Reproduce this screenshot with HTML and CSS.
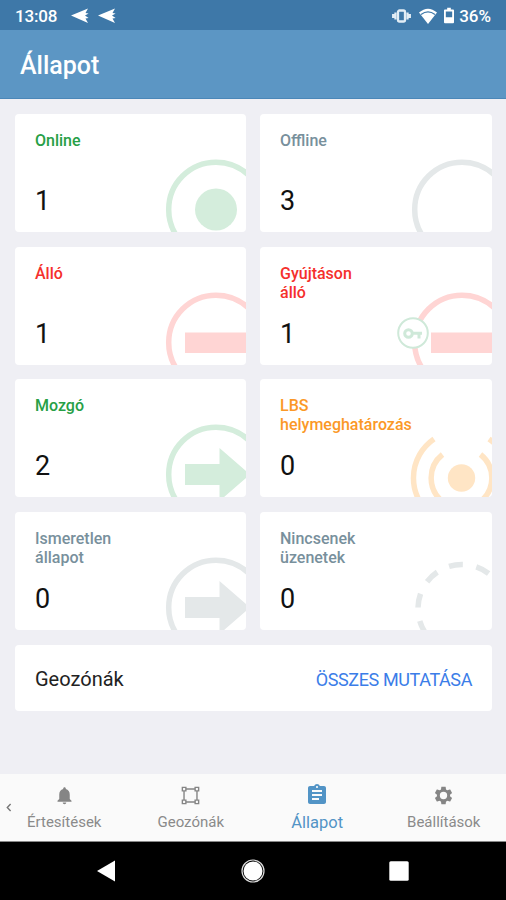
FILE: index.html
```html
<!DOCTYPE html>
<html lang="hu">
  <head>
    <meta charset="UTF-8" />
    <meta name="viewport" content="width=device-width, initial-scale=1.0" />
    <title>Állapot</title>
    <link rel="stylesheet" href="styles.css">
  </head>
  <body>
    <div class="status-bar">
      <span class="clock">13:08</span>
      <svg class="plane" width="18" height="16" viewBox="0 0 18 16"><path d="M0 7.600 17 .5 14.500 5 17.600 5.500 14 7.600 17.600 10 14.500 10.500 17 15Z" /></svg>
      <svg class="plane" width="18" height="16" viewBox="0 0 18 16"><path d="M0 7.600 17 .5 14.500 5 17.600 5.500 14 7.600 17.600 10 14.500 10.500 17 15Z" /></svg>
      <div class="status-right">
        <svg class="vibrate" width="19" height="14" viewBox="0 0 19 14"><path d="M1.200 5v4M3.500 3.500v7M15.500 3.500v7M17.800 5v4" /><rect x="6" y="1.500" width="7" height="11" rx="1.500" /></svg>
        <svg class="wifi" width="18" height="16" viewBox="0 0 18 16"><path d="M0 4.600Q9-3 18 4.600L9 16Z" /><path class="wifi-gap" d="M2 6.400Q9 1.200 16 6.400" /></svg>
        <svg class="battery" width="10" height="17" viewBox="0 0 11 17"><path d="M3.500 0h4v2H10q1 0 1 1v13q0 1-1 1H1q-1 0-1-1V3q0-1 1-1h2.500ZM2 4v6.500h7V4Z" fill-rule="evenodd" /></svg>
        <span class="percent">36%</span>
      </div>
    </div>

    <header class="app-bar">
      <h1>Állapot</h1>
    </header>

    <main class="content">
      <div class="cards">
        <div class="card green">
          <h2>Online</h2>
          <span class="count">1</span>
          <svg class="mark" viewBox="0 0 100 80">
            <circle class="ring" cx="70" cy="57.5" r="47.300" />
            <circle class="solid" cx="70" cy="57.5" r="21" />
          </svg>
        </div>
        <div class="card gray">
          <h2>Offline</h2>
          <span class="count">3</span>
          <svg class="mark" viewBox="0 0 100 80">
            <circle class="ring" cx="70" cy="57.5" r="47.300" />
          </svg>
        </div>
        <div class="card red">
          <h2>Álló</h2>
          <span class="count">1</span>
          <svg class="mark" viewBox="0 0 100 80">
            <circle class="ring" cx="70" cy="57.5" r="47.300" />
            <rect class="solid" x="39" y="47.500" width="62" height="20.500" />
          </svg>
        </div>
        <div class="card red">
          <h2>Gyújtáson<br>álló</h2>
          <span class="count">1</span>
          <svg class="mark" viewBox="0 0 100 80">
            <circle class="ring" cx="70" cy="57.5" r="47.300" />
            <rect class="solid" x="39" y="47.500" width="62" height="20.500" />
            <circle class="key-badge" cx="21" cy="48" r="14.8" />
            <circle class="key" cx="16.500" cy="48.500" r="3.800" />
            <path class="key" d="M20.500 48.200H30M27 48.500v5" />
          </svg>
        </div>
        <div class="card green">
          <h2>Mozgó</h2>
          <span class="count">2</span>
          <svg class="mark" viewBox="0 0 100 80">
            <circle class="ring" cx="70" cy="57.5" r="47.300" />
            <path class="solid" d="M39 47H73.500V31L104 57.500 73.500 84V68H39Z" />
          </svg>
        </div>
        <div class="card orange">
          <h2>LBS<br>helymeghatározás</h2>
          <span class="count">0</span>
          <svg class="mark" viewBox="0 0 100 80">
            <circle class="solid" cx="69.500" cy="61" r="13.700" />
            <path class="ring" d="M42 22A47.300 47.300 0 0 0 42 100M97 22A47.300 47.300 0 0 1 97 100" />
            <path class="ring" d="M50.500 37.500A30 30 0 0 0 50.500 84.500M88.500 37.500A30 30 0 0 1 88.500 84.500" />
          </svg>
        </div>
        <div class="card gray">
          <h2>Ismeretlen<br>állapot</h2>
          <span class="count">0</span>
          <svg class="mark" viewBox="0 0 100 80">
            <circle class="ring" cx="70" cy="57.5" r="47.300" />
            <path class="solid" d="M39 47H73.500V31L104 57.500 73.500 84V68H39Z" />
          </svg>
        </div>
        <div class="card gray">
          <h2>Nincsenek<br>üzenetek</h2>
          <span class="count">0</span>
          <svg class="mark" viewBox="0 0 100 80">
            <circle class="ring dashed" cx="70" cy="58.500" r="44" transform="rotate(252.900 70 58.500)" />
          </svg>
        </div>
      </div>

      <div class="geozones">
        <span>Geozónák</span>
        <a class="show-all">ÖSSZES MUTATÁSA</a>
      </div>
    </main>

    <nav class="tabs">
      <svg class="back" width="6" height="9" viewBox="0 0 6 9"><path d="M4.600 1 1.300 4.500 4.600 8" /></svg>
      <a class="tab">
        <svg width="24" height="24" viewBox="0 0 24 24"><path d="M12 22c1.100 0 2-.9 2-2h-4c0 1.100.9 2 2 2zm6-6v-5c0-3.070-1.640-5.640-4.500-6.320V4c0-.83-.67-1.500-1.500-1.500s-1.500.67-1.500 1.500v.68C7.630 5.360 6 7.920 6 11v5l-2 2v1h16v-1l-2-2z" /></svg>
        <span>Értesítések</span>
      </a>
      <a class="tab">
        <svg width="24" height="24" viewBox="0 0 24 24"><path class="outline" d="M7 4.600H17M7 19.400H17M4.600 7V17M19.400 7V17M2.700 2.700h4v4h-4zM17.300 2.700h4v4h-4zM2.700 17.300h4v4h-4zM17.300 17.300h4v4h-4z" /></svg>
        <span>Geozónák</span>
      </a>
      <a class="tab active">
        <svg width="24" height="24" viewBox="0 0 24 24"><path d="M19 3h-4.180C14.400 1.840 13.300 1 12 1s-2.400.84-2.820 2H5c-1.100 0-2 .9-2 2v14c0 1.100.9 2 2 2h14c1.100 0 2-.9 2-2V5c0-1.100-.9-2-2-2zm-7 0c.55 0 1 .45 1 1s-.45 1-1 1-1-.45-1-1 .45-1 1-1zm2 14H7v-2h7v2zm3-4H7v-2h10v2zm0-4H7V7h10v2z" /></svg>
        <span>Állapot</span>
      </a>
      <a class="tab">
        <svg width="24" height="24" viewBox="0 0 24 24"><path d="M19.430 12.980c.04-.32.07-.64.07-.98s-.03-.66-.07-.98l2.110-1.650c.19-.15.24-.42.12-.64l-2-3.460c-.12-.22-.39-.3-.61-.22l-2.490 1c-.52-.4-1.080-.73-1.690-.98l-.38-2.650C14.460 2.180 14.250 2 14 2h-4c-.25 0-.46.18-.49.42l-.38 2.650c-.61.25-1.170.59-1.690.98l-2.490-1c-.23-.09-.49 0-.61.22l-2 3.460c-.13.22-.07.49.12.64l2.110 1.650c-.04.32-.07.65-.07.98s.03.66.07.98l-2.110 1.650c-.19.15-.24.42-.12.64l2 3.460c.12.22.39.3.61.22l2.490-1c.52.4 1.080.73 1.690.98l.38 2.650c.03.24.24.42.49.42h4c.25 0 .46-.18.49-.42l.38-2.650c.61-.25 1.170-.59 1.690-.98l2.490 1c.23.09.49 0 .61-.22l2-3.460c.12-.22.07-.49-.12-.64l-2.110-1.650zM12 16.200a4.200 4.200 0 1 1 0-8.400 4.200 4.200 0 0 1 0 8.400z" /></svg>
        <span>Beállítások</span>
      </a>
    </nav>

    <div class="system-nav">
      <svg width="20" height="24" viewBox="0 0 20 24"><path d="M1 12 19 1.500V22.500Z" /></svg>
      <svg width="24" height="24" viewBox="0 0 24 24"><circle cx="12" cy="12" r="9.500" /><circle class="home-ring" cx="12" cy="12" r="11" /></svg>
      <svg width="20" height="20" viewBox="0 0 20 20"><rect x=".3" y=".3" width="19.400" height="19.400" rx="1.500" /></svg>
    </div>
  </body>
</html>
```

FILE: styles.css
```css
* {
  margin: 0;
  padding: 0;
  box-sizing: border-box;
}

body {
  display: flex;
  flex-direction: column;
  height: 900px;
  overflow: hidden;
  background-color: #efeff4;
  font-family: Roboto, "Noto Sans", sans-serif;
}

svg {
  display: block;
  flex: none;
}

/* Status bar */
.status-bar {
  display: flex;
  align-items: center;
  height: 30px;
  padding: 1px 15px 0 15px;
  background-color: #3e78a8;
  color: #fff;
  fill: #fff;
  font-size: 17px;
  font-weight: 500;
}

.clock {
  width: 56px;
  letter-spacing: -0.2px;
}

.plane {
  margin-right: 9px;
}

.status-right {
  display: flex;
  align-items: center;
  margin-left: auto;
}

.vibrate {
  margin-right: 8px;
  fill: none;
  stroke: #e2edf5;
  stroke-width: 2.3;
}

.wifi {
  margin-right: 7px;
}

.wifi-gap {
  fill: none;
  stroke: #3e78a8;
  stroke-width: 1.2;
}

.battery {
  margin-right: 5px;
}

/* Header */
.app-bar {
  display: flex;
  align-items: center;
  height: 69px;
  padding: 2px 20px 0;
  background-color: #5c96c4;
  border-bottom: 1px solid #4b87b8;
  color: #fff;
}

.app-bar h1 {
  font-size: 25px;
  font-weight: 500;
}

/* Cards */
.content {
  flex: 1;
  padding: 15px 14px 0 15px;
}

.cards {
  display: grid;
  grid-template-columns: 231px 232px;
  grid-auto-rows: 118px;
  gap: 14.7px 14px;
}

.card {
  position: relative;
  display: flex;
  flex-direction: column;
  justify-content: space-between;
  padding: 17px 20px 15px;
  overflow: hidden;
  background-color: #fff;
  border-radius: 4px;
}

.card h2 {
  font-size: 16px;
  font-weight: 500;
  line-height: 19px;
}

.count {
  color: #111;
  font-size: 27px;
  line-height: 32px;
}

.mark {
  position: absolute;
  right: 0;
  bottom: 0;
  width: 100px;
  height: 80px;
}

.ring {
  fill: none;
  stroke: var(--tint);
  stroke-width: 5.5;
}

.solid {
  fill: var(--tint);
}

.dashed {
  stroke-dasharray: 14 13.65;
}

.key-badge {
  fill: #fff;
  stroke: #cfe9d9;
  stroke-width: 2;
}

.key {
  fill: none;
  stroke: #cfe9d9;
  stroke-width: 3;
}

.green {
  --tint: #d4eddc;
  color: #27a046;
}

.gray {
  --tint: #e4e8e9;
  color: #78909c;
}

.red {
  --tint: #ffd5d4;
  color: #f5302c;
}

.orange {
  --tint: #ffe5c5;
  color: #fb9827;
}

.geozones {
  display: flex;
  align-items: center;
  justify-content: space-between;
  height: 66px;
  margin-top: 15px;
  padding: 2px 20px 0;
  background-color: #fff;
  border-radius: 4px;
  color: #222;
  font-size: 20px;
}

.show-all {
  color: #3b7de8;
  font-size: 18px;
  letter-spacing: -0.4px;
}

/* Bottom tabs */
.tabs {
  display: flex;
  align-items: center;
  height: 68px;
  background-color: #fafafa;
  border-bottom: 1px solid #888;
}

.back {
  margin-left: 6px;
  margin-right: -11px;
  fill: none;
  stroke: #777;
  stroke-width: 1.4;
}

.tab {
  display: flex;
  flex: 1;
  flex-direction: column;
  align-items: center;
  gap: 7px;
  color: #8a8a8a;
  fill: #858585;
  font-size: 15px;
  line-height: 18px;
}

.tabs .tab:last-child {
  margin-right: -1px;
}

.tab svg {
  width: 21px;
  height: 21px;
}

.tab.active {
  color: #5294c6;
  fill: #5294c6;
  font-size: 16.5px;
}

.tab.active svg {
  width: 24px;
  height: 24px;
}

.outline {
  fill: none;
  stroke: #858585;
  stroke-width: 1.6;
}

/* Android navigation buttons */
.system-nav {
  display: flex;
  align-items: center;
  justify-content: space-between;
  height: 58px;
  padding: 0 97px 0 96px;
  background-color: #000;
  fill: #fff;
}

.home-ring {
  fill: none;
  stroke: #ddd;
  stroke-width: 1.2;
}
```
